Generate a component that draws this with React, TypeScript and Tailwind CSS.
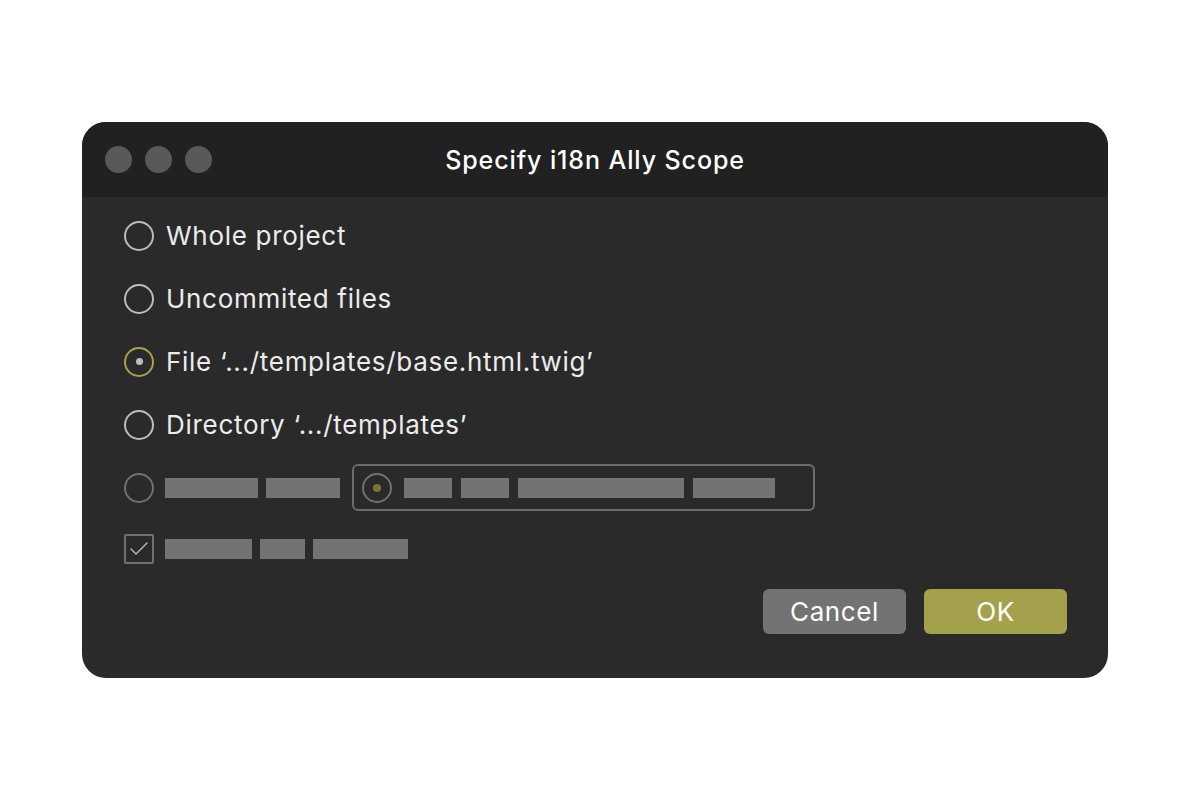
import { Check } from "lucide-react";

const Radio = ({ state }: { state: "off" | "on" | "dim" | "dimOn" }) => {
  const border =
    state === "on"
      ? "border-[#a6a24e]"
      : state === "off"
        ? "border-[#bcbcbc]"
        : "border-[#707070]";
  return (
    <span
      className={`flex h-[30px] w-[30px] shrink-0 items-center justify-center rounded-full border-2 ${border}`}
    >
      {state === "on" && <span className="h-[7px] w-[7px] rounded-full bg-[#bcbcbc]" />}
      {state === "dimOn" && <span className="h-[8px] w-[8px] rounded-full bg-[#77733c]" />}
    </span>
  );
};

const Bar = ({ w }: { w: string }) => <span className={`h-[20px] bg-[#737373] ${w}`} />;

const Option = ({ label, state }: { label: string; state: "off" | "on" }) => (
  <div className="flex h-[63px] items-center gap-[12px]">
    <Radio state={state} />
    <span className="text-[26px] leading-none tracking-[0.7px] text-[#ececec]">{label}</span>
  </div>
);

export default function App() {
  return (
    <div
      className="h-[800px] w-[1190px] bg-white pl-[82px] pt-[122px]"
      style={{ fontFamily: "Inter, 'Noto Sans', sans-serif" }}
    >
      <div className="flex h-[556px] w-[1026px] flex-col overflow-hidden rounded-[24px] bg-[#2a2a2a]">
        {/* title bar */}
        <div className="relative flex h-[75px] items-center justify-center bg-[#212121] pt-[3px]">
          <div className="absolute left-[23px] top-[24px] flex gap-[13px]">
            <span className="h-[27px] w-[27px] rounded-full bg-[#595959]" />
            <span className="h-[27px] w-[27px] rounded-full bg-[#595959]" />
            <span className="h-[27px] w-[27px] rounded-full bg-[#595959]" />
          </div>
          <span className="text-[25px] font-medium tracking-[0.9px] text-white">Specify i18n Ally Scope</span>
        </div>

        {/* options */}
        <div className="flex flex-col pl-[42px] pr-[41px] pt-[7px]">
          <Option label="Whole project" state="off" />
          <Option label="Uncommited files" state="off" />
          <Option label="File ‘.../templates/base.html.twig’" state="on" />
          <Option label="Directory ‘.../templates’" state="off" />

          <div className="flex h-[63px] items-center">
            <Radio state="dim" />
            <div className="ml-[11px] flex gap-[8px]">
              <Bar w="w-[93px]" />
              <Bar w="w-[74px]" />
            </div>
            <div className="ml-[12px] flex h-[47px] w-[463px] items-center rounded-[6px] border-2 border-[#6c6c6c] pl-[8px]">
              <Radio state="dimOn" />
              <div className="ml-[12px] flex gap-[9px]">
                <Bar w="w-[48px]" />
                <Bar w="w-[48px]" />
                <Bar w="w-[166px]" />
                <Bar w="w-[82px]" />
              </div>
            </div>
          </div>

          <div className="flex h-[60px] items-center">
            <span className="flex h-[30px] w-[30px] items-center justify-center rounded-[2px] border-2 border-[#707070]">
              <Check className="h-[24px] w-[24px] text-[#bcbcbc]" strokeWidth={1.3} />
            </span>
            <div className="ml-[11px] flex gap-[8px]">
              <Bar w="w-[87px]" />
              <Bar w="w-[45px]" />
              <Bar w="w-[95px]" />
            </div>
          </div>
        </div>

        {/* buttons */}
        <div className="mt-[10px] flex justify-end gap-[18px] pr-[41px]">
          <button className="flex h-[45px] w-[143px] items-center justify-center rounded-[6px] bg-[#737373] text-[26px] tracking-[0.6px] text-white">
            Cancel
          </button>
          <button className="flex h-[45px] w-[143px] items-center justify-center rounded-[6px] bg-[#a4a14c] text-[26px] tracking-[0.6px] text-white">
            OK
          </button>
        </div>
      </div>
    </div>
  );
}
